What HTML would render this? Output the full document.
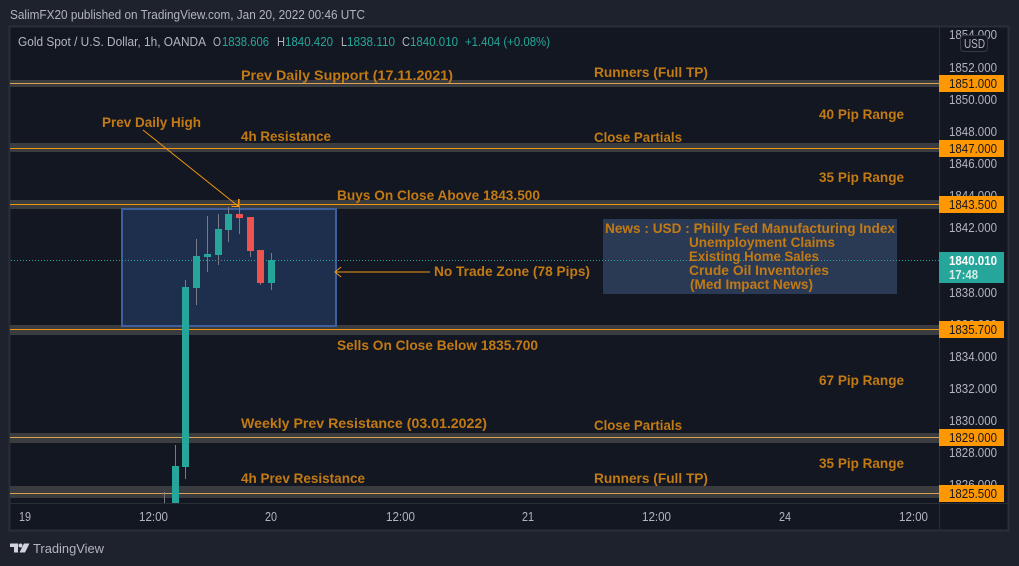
<!DOCTYPE html>
<html><head><meta charset="utf-8"><style>
html,body{margin:0;padding:0;background:#1e222d;width:1019px;height:566px;overflow:hidden}
svg{display:block}
text{font-family:"Liberation Sans",sans-serif}
.l{font-size:14px;font-weight:bold;fill:#c27a14}
.t{font-size:13px;fill:#b2b5be}
.u{font-size:13px;fill:#b2b5be}
.p{font-size:13px;fill:#131722}
.g{font-size:13px;fill:#26a69a}
</style></head><body>
<svg width="1019" height="566" viewBox="0 0 1019 566" xmlns="http://www.w3.org/2000/svg">
<rect width="1019" height="566" fill="#1e222d"/>
<text x="10" y="19" class="u" textLength="355" lengthAdjust="spacingAndGlyphs">SalimFX20 published on TradingView.com, Jan 20, 2022 00:46 UTC</text>
<rect x="9.5" y="26.5" width="999" height="504" fill="#131722" stroke="#2a2e39" stroke-width="2"/>
<!-- bands -->
<g fill="#3b3c40">
<rect x="10" y="80" width="929" height="7"/>
<rect x="10" y="143" width="929" height="9"/>
<rect x="10" y="200" width="929" height="9"/>
<rect x="10" y="325" width="929" height="10"/>
<rect x="10" y="433" width="929" height="10"/>
<rect x="10" y="486" width="929" height="12"/>
</g>
<g fill="#f0950f">
<rect x="10" y="148" width="929" height="1"/>
<rect x="10" y="204" width="929" height="1"/>
<rect x="10" y="329" width="929" height="1"/>
</g>
<g fill="#d9a04f">
<rect x="10" y="83" width="929" height="1"/>
<rect x="10" y="437" width="929" height="1"/>
<rect x="10" y="493" width="929" height="1"/>
</g>
<!-- box -->
<rect x="122" y="209" width="214" height="117" fill="#1e2e4d" stroke="#3f5f9e" stroke-width="2"/>
<!-- news box -->
<rect x="603" y="219" width="294" height="75" fill="#2a3a55"/>
<!-- current price -->
<line x1="11" y1="260.5" x2="939" y2="260.5" stroke="#26a69a" stroke-width="1" stroke-dasharray="1 2"/>
<!-- wicks -->
<g stroke="#787b86" stroke-width="1">
<line x1="164.5" y1="492" x2="164.5" y2="503"/>
<line x1="175.5" y1="445" x2="175.5" y2="466"/>
<line x1="185.5" y1="280" x2="185.5" y2="479"/>
<line x1="196.5" y1="239" x2="196.5" y2="305"/>
<line x1="207.5" y1="216" x2="207.5" y2="272"/>
<line x1="218.5" y1="214" x2="218.5" y2="265"/>
<line x1="228.5" y1="207" x2="228.5" y2="242"/>
<line x1="239.5" y1="199" x2="239.5" y2="234"/>
<line x1="250.5" y1="217" x2="250.5" y2="257"/>
<line x1="260.5" y1="250" x2="260.5" y2="285"/>
<line x1="271.5" y1="253" x2="271.5" y2="290"/>
</g>
<!-- bodies -->
<g fill="#26a69a">
<rect x="172" y="466" width="7" height="37"/>
<rect x="182" y="287" width="7" height="180"/>
<rect x="193" y="256" width="7" height="32"/>
<rect x="204" y="254" width="7" height="3"/>
<rect x="215" y="229" width="7" height="26"/>
<rect x="225" y="214" width="7" height="16"/>
<rect x="268" y="260" width="7" height="23"/>
</g>
<g fill="#ef5350">
<rect x="236" y="214" width="7" height="4"/>
<rect x="247" y="217" width="7" height="34"/>
<rect x="257" y="250" width="7" height="33"/>
</g>
<!-- arrows -->
<g stroke="#f0950f" stroke-width="1" fill="none">
<line x1="143" y1="130" x2="238" y2="206"/>
<path d="M231.5 206.5 L238.5 206.5 L238.5 199"/>
<line x1="335" y1="272" x2="430" y2="272"/>
<path d="M341 267 L335 272 L341 277"/>
</g>
<!-- labels -->
<text class="l" x="241" y="80" textLength="212" lengthAdjust="spacingAndGlyphs">Prev Daily Support (17.11.2021)</text>
<text class="l" x="594" y="77" textLength="114" lengthAdjust="spacingAndGlyphs">Runners (Full TP)</text>
<text class="l" x="819" y="119" textLength="85" lengthAdjust="spacingAndGlyphs">40 Pip Range</text>
<text class="l" x="102" y="127" textLength="99" lengthAdjust="spacingAndGlyphs">Prev Daily High</text>
<text class="l" x="241" y="141" textLength="90" lengthAdjust="spacingAndGlyphs">4h Resistance</text>
<text class="l" x="594" y="142" textLength="88" lengthAdjust="spacingAndGlyphs">Close Partials</text>
<text class="l" x="819" y="182" textLength="85" lengthAdjust="spacingAndGlyphs">35 Pip Range</text>
<text class="l" x="337" y="200" textLength="203" lengthAdjust="spacingAndGlyphs">Buys On Close Above 1843.500</text>
<text class="l" x="605" y="233" textLength="290" lengthAdjust="spacingAndGlyphs">News : USD : Philly Fed Manufacturing Index</text>
<text class="l" x="689" y="247" textLength="146" lengthAdjust="spacingAndGlyphs">Unemployment Claims</text>
<text class="l" x="689" y="261" textLength="130" lengthAdjust="spacingAndGlyphs">Existing Home Sales</text>
<text class="l" x="689" y="275" textLength="140" lengthAdjust="spacingAndGlyphs">Crude Oil Inventories</text>
<text class="l" x="690" y="289" textLength="123" lengthAdjust="spacingAndGlyphs">(Med Impact News)</text>
<text class="l" x="434" y="276" textLength="156" lengthAdjust="spacingAndGlyphs">No Trade Zone (78 Pips)</text>
<text class="l" x="337" y="350" textLength="201" lengthAdjust="spacingAndGlyphs">Sells On Close Below 1835.700</text>
<text class="l" x="819" y="385" textLength="85" lengthAdjust="spacingAndGlyphs">67 Pip Range</text>
<text class="l" x="241" y="428" textLength="246" lengthAdjust="spacingAndGlyphs">Weekly Prev Resistance (03.01.2022)</text>
<text class="l" x="594" y="430" textLength="88" lengthAdjust="spacingAndGlyphs">Close Partials</text>
<text class="l" x="819" y="468" textLength="85" lengthAdjust="spacingAndGlyphs">35 Pip Range</text>
<text class="l" x="241" y="483" textLength="124" lengthAdjust="spacingAndGlyphs">4h Prev Resistance</text>
<text class="l" x="594" y="483" textLength="114" lengthAdjust="spacingAndGlyphs">Runners (Full TP)</text>
<!-- legend -->
<text class="u" x="18" y="46" textLength="188" lengthAdjust="spacingAndGlyphs">Gold Spot / U.S. Dollar, 1h, OANDA</text>
<text class="u" x="213" y="46" textLength="8" lengthAdjust="spacingAndGlyphs">O</text><text class="g" x="222" y="46" textLength="47" lengthAdjust="spacingAndGlyphs">1838.606</text>
<text class="u" x="277" y="46" textLength="8" lengthAdjust="spacingAndGlyphs">H</text><text class="g" x="285" y="46" textLength="48" lengthAdjust="spacingAndGlyphs">1840.420</text>
<text class="u" x="341" y="46" textLength="6" lengthAdjust="spacingAndGlyphs">L</text><text class="g" x="347" y="46" textLength="48" lengthAdjust="spacingAndGlyphs">1838.110</text>
<text class="u" x="402" y="46" textLength="8" lengthAdjust="spacingAndGlyphs">C</text><text class="g" x="410" y="46" textLength="48" lengthAdjust="spacingAndGlyphs">1840.010</text>
<text class="g" x="465" y="46" textLength="85" lengthAdjust="spacingAndGlyphs">+1.404 (+0.08%)</text>
<!-- axes -->
<rect x="939" y="27" width="1" height="503" fill="#2a2e39"/>
<rect x="10" y="503" width="998" height="1" fill="#2a2e39"/>
<g>
<text class="t" x="949" y="39" textLength="48" lengthAdjust="spacingAndGlyphs">1854.000</text>
<text class="t" x="949" y="72" textLength="48" lengthAdjust="spacingAndGlyphs">1852.000</text>
<text class="t" x="949" y="104" textLength="48" lengthAdjust="spacingAndGlyphs">1850.000</text>
<text class="t" x="949" y="136" textLength="48" lengthAdjust="spacingAndGlyphs">1848.000</text>
<text class="t" x="949" y="168" textLength="48" lengthAdjust="spacingAndGlyphs">1846.000</text>
<text class="t" x="949" y="200" textLength="48" lengthAdjust="spacingAndGlyphs">1844.000</text>
<text class="t" x="949" y="232" textLength="48" lengthAdjust="spacingAndGlyphs">1842.000</text>
<text class="t" x="949" y="297" textLength="48" lengthAdjust="spacingAndGlyphs">1838.000</text>
<text class="t" x="949" y="329" textLength="48" lengthAdjust="spacingAndGlyphs">1836.000</text>
<text class="t" x="949" y="361" textLength="48" lengthAdjust="spacingAndGlyphs">1834.000</text>
<text class="t" x="949" y="393" textLength="48" lengthAdjust="spacingAndGlyphs">1832.000</text>
<text class="t" x="949" y="425" textLength="48" lengthAdjust="spacingAndGlyphs">1830.000</text>
<text class="t" x="949" y="457" textLength="48" lengthAdjust="spacingAndGlyphs">1828.000</text>
<text class="t" x="949" y="489" textLength="48" lengthAdjust="spacingAndGlyphs">1826.000</text>
</g>
<!-- USD -->
<rect x="960.5" y="35.5" width="27" height="16" rx="3" fill="#131722" stroke="#363a45"/>
<text class="u" x="964" y="48" textLength="21" lengthAdjust="spacingAndGlyphs">USD</text>
<!-- price labels -->
<g fill="#ff9800">
<rect x="939" y="75" width="65" height="17"/>
<rect x="939" y="140" width="65" height="17"/>
<rect x="939" y="196" width="65" height="17"/>
<rect x="939" y="321" width="65" height="17"/>
<rect x="939" y="429" width="65" height="17"/>
<rect x="939" y="485" width="65" height="17"/>
</g>
<rect x="939" y="252" width="65" height="31" fill="#26a69a"/>
<text class="p" x="949" y="88" textLength="48" lengthAdjust="spacingAndGlyphs">1851.000</text>
<text class="p" x="949" y="153" textLength="48" lengthAdjust="spacingAndGlyphs">1847.000</text>
<text class="p" x="949" y="209" textLength="48" lengthAdjust="spacingAndGlyphs">1843.500</text>
<text class="p" x="949" y="334" textLength="48" lengthAdjust="spacingAndGlyphs">1835.700</text>
<text class="p" x="949" y="442" textLength="48" lengthAdjust="spacingAndGlyphs">1829.000</text>
<text class="p" x="949" y="498" textLength="48" lengthAdjust="spacingAndGlyphs">1825.500</text>
<text x="949" y="265" style="font-size:13px;font-weight:bold;fill:#fff" textLength="48" lengthAdjust="spacingAndGlyphs">1840.010</text>
<text x="949" y="279" style="font-size:13px;fill:#d4ede9;font-weight:bold" textLength="29" lengthAdjust="spacingAndGlyphs">17:48</text>
<!-- time axis -->
<g>
<text class="t" x="19" y="521" textLength="12" lengthAdjust="spacingAndGlyphs">19</text>
<text class="t" x="139" y="521" textLength="29" lengthAdjust="spacingAndGlyphs">12:00</text>
<text class="t" x="265" y="521" textLength="12" lengthAdjust="spacingAndGlyphs">20</text>
<text class="t" x="386" y="521" textLength="29" lengthAdjust="spacingAndGlyphs">12:00</text>
<text class="t" x="522" y="521" textLength="12" lengthAdjust="spacingAndGlyphs">21</text>
<text class="t" x="642" y="521" textLength="29" lengthAdjust="spacingAndGlyphs">12:00</text>
<text class="t" x="779" y="521" textLength="12" lengthAdjust="spacingAndGlyphs">24</text>
<text class="t" x="899" y="521" textLength="29" lengthAdjust="spacingAndGlyphs">12:00</text>
</g>
<!-- logo -->
<path d="M10 543.5 H18 V552.5 H14 V547 H10 Z" fill="#d1d4dc"/>
<circle cx="20.5" cy="545.5" r="2" fill="#d1d4dc"/>
<path d="M24 543.5 H29.5 L25 552.5 H19.5 Z" fill="#d1d4dc"/>
<text x="33" y="553" style="font-size:13px;fill:#b2b5be" textLength="71" lengthAdjust="spacingAndGlyphs">TradingView</text>
</svg>
</body></html>
